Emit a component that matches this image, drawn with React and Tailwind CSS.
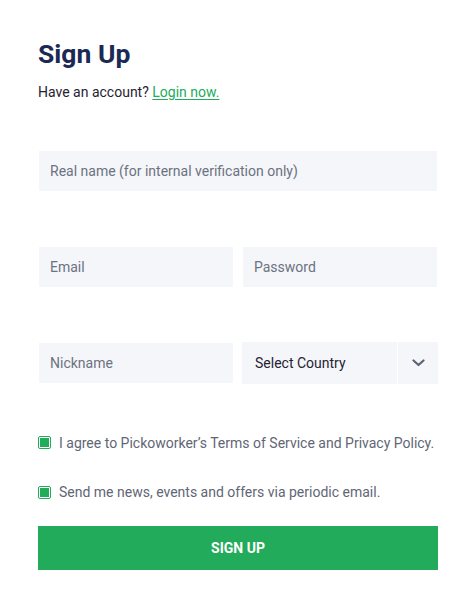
import React from "react";

function Check() {
  return (
    <span className="flex h-[13px] w-[13px] shrink-0 items-center justify-center rounded-[2px] border border-[#22ab5a] bg-white">
      <span className="h-[9px] w-[9px] bg-[#22ab5a]" />
    </span>
  );
}

export default function App() {
  return (
    <div className="min-h-[590px] w-[470px] bg-white font-['Roboto',sans-serif]">
      <div className="ml-[38px] w-[400px] pt-[38px]">
        <h1 className="text-[26.5px] font-bold leading-[32px] text-[#1b2a55]">Sign Up</h1>
        <p className="mt-[12px] text-[14px] leading-[20px] text-[#1f2330]">
          Have an account?{" "}
          <a href="#" className="text-[#22ab5a] underline underline-offset-2">Login now.</a>
        </p>

        <div className="mt-[49px] px-px">
          <div className="flex h-[40px] items-center bg-[#f5f6fa] pl-[11px] text-[14px] text-[#6b7280]">
            Real name (for internal verification only)
          </div>
        </div>

        <div className="mt-[56px] grid grid-cols-2 gap-[10px] px-px">
          <div className="flex h-[40px] items-center bg-[#f5f6fa] pl-[11px] text-[14px] text-[#6b7280]">Email</div>
          <div className="flex h-[40px] items-center bg-[#f5f6fa] pl-[11px] text-[14px] text-[#6b7280]">Password</div>
        </div>

        <div className="mt-[55px] grid grid-cols-2 items-center gap-[10px] px-px">
          <div className="flex h-[40px] items-center bg-[#f5f6fa] pl-[11px] text-[14px] text-[#6b7280]">Nickname</div>
          <div className="-mx-px flex h-[42px] bg-[#f5f6fa]">
            <div className="flex flex-1 items-center pl-[13px] text-[14px] text-[#1f2330]">Select Country</div>
            <div className="flex w-[41px] items-center justify-center border-l border-white">
              <svg width="13" height="8" viewBox="0 0 13 8" fill="none">
                <path d="M1.5 1.5L6.5 6L11.5 1.5" stroke="#5b6475" strokeWidth="2.2" strokeLinecap="round" strokeLinejoin="round" />
              </svg>
            </div>
          </div>
        </div>

        <div className="mt-[48.5px] flex items-center gap-[8px] text-[14px] leading-[20px] text-[#5f6675]">
          <Check />
          <span>I agree to Pickoworker’s Terms of Service and Privacy Policy.</span>
        </div>
        <div className="mt-[29.5px] flex items-center gap-[8px] text-[14px] leading-[20px] text-[#5f6675]">
          <Check />
          <span>Send me news, events and offers via periodic email.</span>
        </div>

        <button className="mt-[24px] flex h-[44px] w-full items-center justify-center bg-[#22ab5a] text-[14px] font-bold text-white">
          SIGN UP
        </button>
      </div>
    </div>
  );
}
